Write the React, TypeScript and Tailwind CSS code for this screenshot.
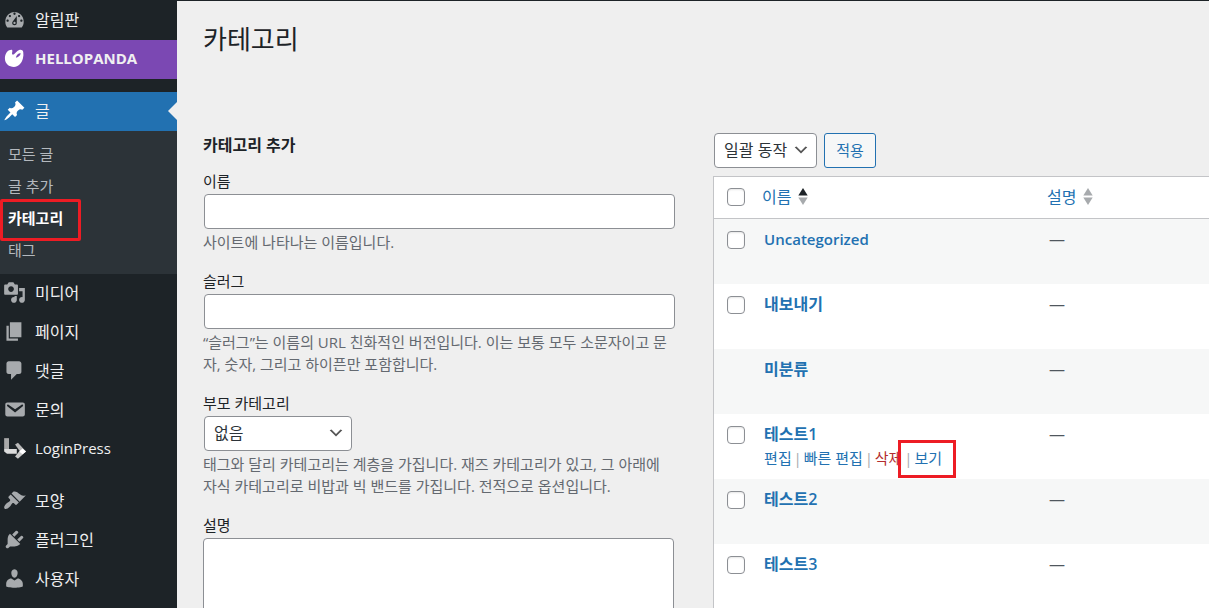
import clsx from 'clsx';
import type { ReactNode } from 'react';

const icons = {
  dashboard:
    'M3.76 17h12.48c1.11-1.42 1.77-3.21 1.77-5.14 0-4.6-3.59-8.34-8-8.34s-8 3.74-8 8.34c0 1.94.65 3.72 1.75 5.14zM10 4c.55 0 1 .45 1 1s-.45 1-1 1-1-.45-1-1 .45-1 1-1zM6 6c.55 0 1 .45 1 1s-.45 1-1 1-1-.45-1-1 .45-1 1-1zm8 0c.55 0 1 .45 1 1s-.45 1-1 1-1-.45-1-1 .45-1 1-1zm-5.37 5.55L12 7v6c0 1.1-.9 2-2 2s-2-.9-2-2c0-.57.24-1.08.63-1.45zM4 10c.55 0 1 .45 1 1s-.45 1-1 1-1-.45-1-1 .45-1 1-1zm12 0c.55 0 1 .45 1 1s-.45 1-1 1-1-.45-1-1 .45-1 1-1zm-5 3c0-.55-.45-1-1-1s-1 .45-1 1 .45 1 1 1 1-.45 1-1z',
  panda:
    'M7.8 2.4C8.700 3.600 7.600 5 7.900 6.100c.2.800 1.300.500 1.900 0 1.700-1.400 2.300-2.900 4.300-3.500 1.700-.5 3.200.1 3.500 1.800.3 1.900.2 3.800-.3 5.600-1.100 4.300-4 7.400-7.800 7.400-4.300 0-7.600-2.900-7.800-6.900C1.500 6.600 3.400 2.300 7.800 2.400zM11.200 9.300c1.700-.2 4-1.600 4.200-3.800-1.700-.3-4 1.500-4.200 3.800z',
  post: 'M10.44 3.02l1.82-1.82 6.36 6.35-1.83 1.82c-1.05-.68-2.48-.57-3.41.36l-.75.75c-.92.93-1.04 2.35-.35 3.41l-1.83 1.82-2.41-2.41-2.8 2.79c-.42.42-3.38 2.71-3.8 2.29s1.86-3.39 2.28-3.81l2.79-2.79L4.1 9.36l1.83-1.82c1.05.69 2.48.57 3.4-.36l.75-.75c.93-.92 1.05-2.35.36-3.41z',
  media:
    'M13 11V4c0-.55-.45-1-1-1h-1.67L9 1H5L3.67 3H2c-.55 0-1 .45-1 1v7c0 .55.45 1 1 1h10c.55 0 1-.45 1-1zM7 4.5c1.38 0 2.5 1.12 2.5 2.5S8.38 9.5 7 9.5 4.5 8.38 4.5 7 5.62 4.5 7 4.5zM14 6h5v10.5c0 1.38-1.12 2.5-2.5 2.5S14 17.88 14 16.5s1.12-2.5 2.5-2.5c.17 0 .34.02.5.05V9h-3V6zm-4 8.05V13h2v3.5c0 1.38-1.12 2.5-2.5 2.5S7 17.88 7 16.5 8.12 14 9.5 14c.17 0 .34.02.5.05z',
  page: 'M6 15V2h10v13H6zm-1 1h8v2H3V5h2v11z',
  comments:
    'M5 2h9c1.1 0 2 .9 2 2v7c0 1.1-.9 2-2 2h-2l-5 5v-5H5c-1.1 0-2-.9-2-2V4c0-1.1.9-2 2-2z',
  email:
    'M3.87 4h13.25C18.37 4 19 4.59 19 5.79v8.42c0 1.19-.63 1.79-1.88 1.79H3.87c-1.25 0-1.88-.6-1.88-1.79V5.79c0-1.2.63-1.79 1.88-1.79zm6.62 8.6l6.74-5.53c.24-.2.43-.66.13-1.07-.29-.41-.82-.42-1.17-.17l-5.7 3.86L4.8 5.83c-.35-.25-.88-.24-1.17.17-.3.41-.11.87.13 1.07z',
  appearance:
    'M14.48 11.06L7.41 3.99l1.5-1.5c.5-.56 2.3-.47 3.51.32 1.21.8 1.43 1.28 2.91 2.1 1.18.64 2.45 1.26 4.45.85zm-.71.71L6.7 4.7 4.93 6.47c-.39.39-.39 1.02 0 1.41l1.06 1.06c.39.39.39 1.03 0 1.42-.6.6-1.43 1.11-2.21 1.69-.35.26-.7.53-1.01.84C1.43 14.23.4 16.08 1.4 17.07c.99 1 2.84-.03 4.18-1.36.31-.31.58-.66.85-1.02.57-.78 1.08-1.61 1.69-2.21.39-.39 1.02-.39 1.41 0l1.06 1.06c.39.39 1.02.39 1.41 0z',
  plugins:
    'M13.11 4.36L9.87 7.6 8 5.73l3.24-3.24c.35-.34 1.05-.2 1.56.32.52.51.66 1.21.31 1.55zm-8 1.77l.91-1.12 9.01 9.01-1.19.84c-.71.71-2.63 1.16-3.82 1.16H6.14L4.9 17.26c-.59.59-1.54.59-2.12 0-.59-.58-.59-1.53 0-2.12l1.24-1.24v-3.88c0-1.13.4-3.19 1.09-3.89zm7.26 3.97l3.24-3.24c.34-.35 1.04-.21 1.55.31.52.51.66 1.21.31 1.55l-3.24 3.25z',
  users:
    'M10 9.25c-2.27 0-2.73-3.44-2.73-3.44C7 4.02 7.82 2 9.97 2c2.16 0 2.98 2.02 2.71 3.81 0 0-.41 3.44-2.68 3.44zm0 2.57L12.72 10c2.39 0 4.52 2.33 4.52 4.53v2.49s-3.65 1.13-7.24 1.13c-3.65 0-7.24-1.13-7.24-1.13v-2.49c0-2.25 1.94-4.48 4.47-4.48z',
} as const;

type IconName = keyof typeof icons;

function MenuIcon({ name }: { name: IconName }) {
  return (
    <svg viewBox="0 0 20 20" className="size-[23px] shrink-0" fill="currentColor" fillRule="evenodd" aria-hidden="true">
      <path d={icons[name]} />
    </svg>
  );
}

function LoginPressIcon() {
  return (
    <svg viewBox="0 0 20 20" className="size-[23px] shrink-0" aria-hidden="true">
      <path d="M1 1h4.2v9.5H1z" fill="#a9a9a9" />
      <path d="M1 10.5h11v4H3.500L1 12.500z" fill="#dcdcdc" />
      <path d="M10.5 6.500 13 5l7 7.500-3.500 2.500z" fill="#b9b9b9" />
      <path d="M20 12.500 13 19l-2.500-2 3.500-4.500z" fill="#c9c9c9" />
      <path d="m14 12.500 3-2.500 3 2.500-3 2.500z" fill="#fff" />
    </svg>
  );
}

function MenuItem({
  icon,
  children,
  className = 'text-base text-[#a7aaad]',
  current,
}: {
  icon: ReactNode;
  children: ReactNode;
  className?: string;
  current?: boolean;
}) {
  return (
    <a href="#" className={clsx('relative flex h-[39px] items-center gap-[9px] pb-[2px] pl-[3px]', className)}>
      {icon}
      <span className="text-[#f0f0f1]">{children}</span>
      {current && (
        <svg viewBox="0 0 9 18" className="absolute top-[10px] right-0 h-[18px] w-[9px]" aria-hidden="true">
          <path d="M9 0v18L0 9z" fill="#efefef" />
        </svg>
      )}
    </a>
  );
}

const submenu = [
  { label: '모든 글' },
  { label: '글 추가' },
  { label: '카테고리', current: true },
  { label: '태그' },
];

function Sidebar() {
  return (
    <nav className="w-[177px] shrink-0 bg-[#1d2327]">
      <MenuItem icon={<MenuIcon name="dashboard" />}>알림판</MenuItem>
      <MenuItem icon={<MenuIcon name="panda" />} className="bg-[#7b48b3] text-[15px] font-bold text-white">
        HELLOPANDA
      </MenuItem>
      <div className="h-[13px]" />
      <MenuItem icon={<MenuIcon name="post" />} className="bg-[#2271b1] text-base text-white" current>
        글
      </MenuItem>
      <ul className="bg-[#2c3338] pt-[7px] pb-2 text-[15px] text-[#b4b9be]">
        {submenu.map((item) => (
          <li key={item.label} className="relative">
            <a href="#" className={clsx('flex h-8 items-center pl-2', item.current && 'font-bold text-white')}>
              {item.label}
            </a>
            {item.current && (
              <span className="pointer-events-none absolute -top-[3px] left-0 h-[42px] w-[81px] rounded-xs border-3 border-[#ed1c24]" />
            )}
          </li>
        ))}
      </ul>
      <MenuItem icon={<MenuIcon name="media" />}>미디어</MenuItem>
      <MenuItem icon={<MenuIcon name="page" />}>페이지</MenuItem>
      <MenuItem icon={<MenuIcon name="comments" />}>댓글</MenuItem>
      <MenuItem icon={<MenuIcon name="email" />}>문의</MenuItem>
      <MenuItem icon={<LoginPressIcon />} className="text-[15px]">
        LoginPress
      </MenuItem>
      <div className="h-[13px]" />
      <MenuItem icon={<MenuIcon name="appearance" />}>모양</MenuItem>
      <MenuItem icon={<MenuIcon name="plugins" />}>플러그인</MenuItem>
      <MenuItem icon={<MenuIcon name="users" />}>사용자</MenuItem>
    </nav>
  );
}

function Select({ id, label, option, className }: { id: string; label?: string; option: string; className: string }) {
  return (
    <div className={clsx('relative', className)}>
      <select
        id={id}
        aria-label={label}
        className="block h-[35px] w-full appearance-none rounded-[4px] border border-[#8c8f94] bg-white pr-7 pb-[2px] pl-[9px] text-base text-[#2c3338]"
      >
        <option>{option}</option>
      </select>
      <svg
        viewBox="0 0 20 20"
        className="pointer-events-none absolute top-2 right-[7px] size-[18px]"
        aria-hidden="true"
      >
        <path d="m5 6 5 5 5-5 2 1-7 7-7-7z" fill="#555" />
      </svg>
    </div>
  );
}

function Field({ id, label, hint, children }: { id: string; label: string; hint?: string; children: ReactNode }) {
  return (
    <div className="flex flex-col gap-[2px] text-[15px] leading-[22px]">
      <label htmlFor={id}>{label}</label>
      {children}
      {hint && <p className="text-[#646970]">{hint}</p>}
    </div>
  );
}

const inputClass = 'ml-px -mr-px h-[35px] rounded-[4px] border border-[#8c8f94] bg-white px-2';

function AddCategoryForm() {
  return (
    <form>
      <h2 className="text-base leading-6 font-semibold">카테고리 추가</h2>
      <div className="mt-[13px] flex flex-col gap-[17px]">
        <Field id="name" label="이름" hint="사이트에 나타나는 이름입니다.">
          <input id="name" type="text" className={inputClass} />
        </Field>
        <Field
          id="slug"
          label="슬러그"
          hint="“슬러그”는 이름의 URL 친화적인 버전입니다. 이는 보통 모두 소문자이고 문자, 숫자, 그리고 하이픈만 포함합니다."
        >
          <input id="slug" type="text" className={inputClass} />
        </Field>
        <Field
          id="parent"
          label="부모 카테고리"
          hint="태그와 달리 카테고리는 계층을 가집니다. 재즈 카테고리가 있고, 그 아래에 자식 카테고리로 비밥과 빅 밴드를 가집니다. 전적으로 옵션입니다."
        >
          <Select id="parent" option="없음" className="ml-px w-[148px]" />
        </Field>
        <Field id="description" label="설명">
          <textarea id="description" rows={5} className="rounded-[4px] border border-[#8c8f94] bg-white p-2" />
        </Field>
      </div>
    </form>
  );
}

function SortArrows({ active }: { active?: boolean }) {
  return (
    <svg viewBox="0 0 10 17" className="h-[17px] w-[10px]" aria-hidden="true">
      <path d="M5 0l4.700 7.500H.3z" fill={active ? '#1d2327' : '#a7aaad'} />
      <path d="M5 17L.3 9.500h9.400z" fill="#a7aaad" />
    </svg>
  );
}

function Checkbox({ label }: { label: string }) {
  return (
    <input
      type="checkbox"
      aria-label={label}
      className="block size-[18px] appearance-none rounded-[4px] border border-[#8c8f94] bg-white shadow-[inset_0_1px_2px_rgba(0,0,0,0.1)]"
    />
  );
}

const categories = [
  { name: 'Uncategorized', latin: true },
  { name: '내보내기' },
  { name: '미분류', locked: true },
  { name: '테스트1', actions: true },
  { name: '테스트2' },
  { name: '테스트3' },
];

function Divider() {
  return <span className="inline-block w-3 text-center text-[#a7aaad]">|</span>;
}

function RowActions() {
  return (
    <div className="flex items-center text-[15px] leading-6 whitespace-nowrap">
      <a href="#" className="text-[#2271b1]">
        편집
      </a>
      <Divider />
      <a href="#" className="text-[#2271b1]">
        빠른 편집
      </a>
      <Divider />
      <a href="#" className="text-[#b32d2e]">
        삭제
      </a>
      <span className="relative">
        <Divider />
        <a href="#" className="text-[#2271b1]">
          보기
        </a>
        <span className="pointer-events-none absolute -top-[6px] -right-[14px] h-[38px] w-[58px] border-3 border-[#ed1c24]" />
      </span>
    </div>
  );
}

function CategoryTable() {
  return (
    <section className="min-w-0">
      <div className="flex gap-[7px] pl-px">
        <Select id="bulk" label="일괄 작업 선택" option="일괄 동작" className="w-[103px]" />
        <button
          type="button"
          className="h-[35px] w-[52px] rounded-[3px] border border-[#2271b1] bg-[#f6f7f7] text-[15px] text-[#2271b1]"
        >
          적용
        </button>
      </div>
      <table className="mt-2 w-full table-fixed border-separate border-spacing-0 border-t border-l border-[#c3c4c7] bg-white text-left text-base">
        <thead>
          <tr className="h-[42px]">
            <th scope="col" className="w-[39px] border-b border-[#c3c4c7] pb-[2px] pl-[13px]">
              <Checkbox label="모두 선택" />
            </th>
            <th scope="col" className="w-[285px] border-b border-[#c3c4c7] pb-[2px] pl-[9px] font-normal">
              <a href="#" className="flex items-center gap-[6px] text-[#2271b1]">
                이름 <SortArrows active />
              </a>
            </th>
            <th scope="col" className="border-b border-[#c3c4c7] pb-[2px] pl-[9px] font-normal">
              <a href="#" className="flex items-center gap-[6px] text-[#2271b1]">
                설명 <SortArrows />
              </a>
            </th>
          </tr>
        </thead>
        <tbody>
          {categories.map((category) => (
            <tr key={category.name} className="h-[65px] align-top odd:bg-[#f6f7f7]">
              <td className="pt-3 pl-[13px]">{!category.locked && <Checkbox label={`${category.name} 선택`} />}</td>
              <td className="pt-2 pl-[11px] leading-6">
                <a href="#" className={clsx('block font-semibold text-[#2271b1]', category.latin && 'text-[15px]')}>
                  {category.name}
                </a>
                {category.actions && <RowActions />}
              </td>
              <td className="pt-2 pl-[11px] leading-6 text-[#50575e]">—</td>
            </tr>
          ))}
        </tbody>
      </table>
    </section>
  );
}

export default function App() {
  return (
    <div className="flex min-h-screen flex-col bg-[#efefef] font-['Open_Sans','Noto_Sans_CJK_KR',sans-serif] text-[#1d2327]">
      <header className="h-px bg-[#1d2327]" />
      <div className="flex flex-1">
        <Sidebar />
        <main className="min-w-0 flex-1 pt-[22px] pl-[26px]">
          <h1 className="text-[26px] leading-8">카테고리</h1>
          <div className="mt-[78px] grid grid-cols-[19fr_20fr] gap-[39px]">
            <AddCategoryForm />
            <CategoryTable />
          </div>
        </main>
      </div>
    </div>
  );
}
